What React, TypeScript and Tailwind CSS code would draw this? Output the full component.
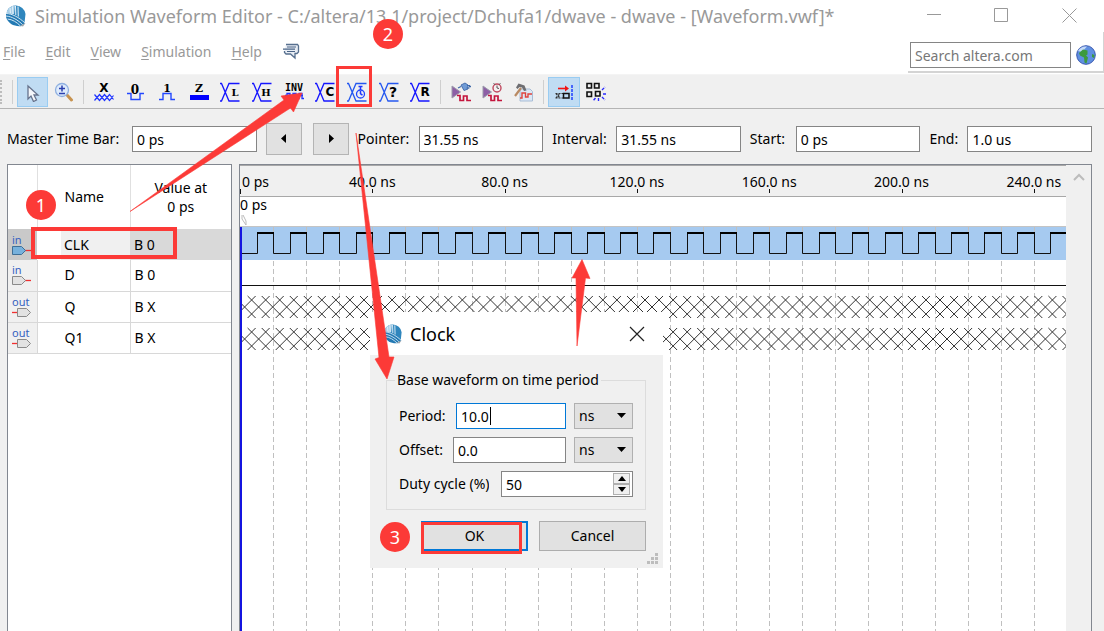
import type { ReactNode } from "react";

const PX_PER_NS = 3.3075;
const PERIOD = 10;
const CYCLES = 100;
const LABEL_STEP = 40;
const LABEL_COUNT = 6;
const RED = "#fc3a37";

const AlteraLogo = ({ className }: { className: string }) => (
  <svg viewBox="0 0 22 22" className={className} aria-hidden="true">
    <path d="M2 6A10 10 0 0 1 11 .5 10 10 0 0 1 20.500 9l-1 9L8 10z" fill="#2f86bd" />
    <path d="M2 6A10 10 0 0 1 10 .5L9 9 1 9z" fill="#a9cfe8" />
    <path d="M5 3l.5 6M7.500 1.500L8 9M10.500 1l.3 9M13 1.500l.3 10" stroke="#e3f1fa" strokeWidth="1" fill="none" />
    <path d="M1 8c6 0 13 4 19 10l-3 3C10 22 3 19 1 12z" fill="#2279b3" />
    <path d="M1 8.500c6 0 13 4 19 9.500M1 11c6 .5 12 4 17 9M2.500 14c5 .5 9 3 13 7" stroke="#d3e7f4" strokeWidth="1" fill="none" />
    <path d="M15 20.500l5.500-2.500-2.500 3.500z" fill="#9aa5ad" />
  </svg>
);

const Glyph = ({ children }: { children: ReactNode }) => (
  <svg viewBox="0 0 20 20" className="block h-5 w-5" aria-hidden="true">
    {children}
  </svg>
);

const CrossBus = ({ children, color = "#1414ff" }: { children: ReactNode; color?: string }) => (
  <Glyph>
    <path d="M0 1.500h1.500L9 19h10.500M0 19h1.500L9 1.500h10.500" fill="none" stroke={color} strokeWidth="1.300" />
    {children}
  </Glyph>
);

const Letter = ({ x, y, size, serif, children }: { x: number; y: number; size: number; serif?: boolean; children: string }) => (
  <text
    x={x}
    y={y}
    fontSize={size}
    fontWeight="700"
    textAnchor="middle"
    fontFamily={serif ? "'DejaVu Serif', serif" : "'DejaVu Sans', sans-serif"}
  >
    {children}
  </text>
);

const SimBase = () => (
  <>
    <path d="M1 4l8.500 6-8.500 6z" fill="#8d5fa5" stroke="#9c9cab" strokeWidth="1" />
    <path d="M6 13.500h3v5h3.500v-4.500h3.500v4.500H20" fill="none" stroke="#c4143c" strokeWidth="1.700" />
  </>
);

const waveTools = [
  {
    name: "Forcing unknown",
    icon: (
      <Glyph>
        <Letter x={10} y={10} size={12}>X</Letter>
        <path d="M.5 12.500l5 6 5-6 5 6 4-5M.5 18.500l5-6 5 6 5-6 4 5" fill="none" stroke="#1f35ff" strokeWidth="1.200" />
      </Glyph>
    ),
  },
  {
    name: "Forcing low",
    icon: (
      <Glyph>
        <path d="M2 11.500h4v6h9v-6h4" fill="none" stroke="#2247ff" strokeWidth="1.400" />
        <Letter x={10} y={12} size={12} serif>0</Letter>
      </Glyph>
    ),
  },
  {
    name: "Forcing high",
    icon: (
      <Glyph>
        <path d="M2 17.500h4v-6h8v6h4" fill="none" stroke="#2247ff" strokeWidth="1.400" />
        <Letter x={10} y={10} size={11} serif>1</Letter>
      </Glyph>
    ),
  },
  {
    name: "High impedance",
    icon: (
      <Glyph>
        <Letter x={10} y={10} size={11} serif>Z</Letter>
        <path d="M1 13h19v5H1z" fill="#0000ff" />
      </Glyph>
    ),
  },
  { name: "Weak low", icon: <CrossBus><Letter x={15} y={14} size={10} serif>L</Letter></CrossBus> },
  { name: "Weak high", icon: <CrossBus><Letter x={14} y={14} size={10} serif>H</Letter></CrossBus> },
  {
    name: "Invert",
    icon: (
      <Glyph>
        <text x="10" y="9" fontSize="10" fontWeight="700" textAnchor="middle" fontFamily="'DejaVu Sans Mono', monospace">INV</text>
        <path d="M1 16.500h2v-5h3v5h3v-5h3v5h3v-5h3v5h2M1 13.500h18" fill="none" stroke="#1f35ff" strokeWidth="1.300" />
      </Glyph>
    ),
  },
  { name: "Count value", icon: <CrossBus><Letter x={15} y={14} size={12}>C</Letter></CrossBus> },
  {
    name: "Overwrite clock",
    icon: (
      <CrossBus color="#2457f0">
        <circle cx="13.500" cy="12" r="4" fill="#f0f0f0" stroke="#1f45ff" strokeWidth="1.300" />
        <path d="M13.500 8V4M11.500 4.500h4M13.500 12V9M13.500 12l2 1" stroke="#1f35ff" strokeWidth="1.500" />
      </CrossBus>
    ),
  },
  { name: "Arbitrary value", icon: <CrossBus color="#2457f0"><Letter x={14} y={15} size={14}>?</Letter></CrossBus> },
  { name: "Random values", icon: <CrossBus><Letter x={15} y={14} size={12}>R</Letter></CrossBus> },
];

const simTools = [
  {
    name: "Run functional simulation",
    icon: (
      <Glyph>
        <SimBase />
        <path d="M7 6l3-1.500M18 4.500h2" stroke="#3f68a8" strokeWidth="1.300" />
        <path d="M10 3l4-2 3 2v4l-4 1.500z" fill="#6f9bd6" stroke="#3f68a8" strokeWidth=".9" />
        <path d="M16 3.500h3M15.500 6h3" stroke="#3f68a8" strokeWidth="1" />
      </Glyph>
    ),
  },
  {
    name: "Run timing simulation",
    icon: (
      <Glyph>
        <SimBase />
        <circle cx="15" cy="6" r="4" fill="#f6eef0" stroke="#c0495f" strokeWidth="1.400" />
        <path d="M15 3.500V6l2 .5M11.500 1.500l1.500 1M18.500 1.500l-1.500 1" fill="none" stroke="#555" strokeWidth="1" />
      </Glyph>
    ),
  },
  {
    name: "Generate testbench",
    icon: (
      <Glyph>
        <path d="M7 7h10l2.500 2.500V19H7z" fill="#dce8f5" stroke="#a8bdd6" />
        <path d="M7 16h2v-5h3.500v4H15v-3h4" fill="none" stroke="#e0433c" strokeWidth="1.400" />
        <path d="M8 6L2 14" stroke="#b98a63" strokeWidth="2.200" />
        <path d="M3 5.500L5.500 1.500l6 2 2 5-2.500.5-2-3.500-2.500-.5-2 2z" fill="#6e6e72" />
      </Glyph>
    ),
  },
];

const toolButton = "flex h-[30px] items-center justify-center";

const Separator = () => <span className="mx-[4px] h-6 w-px bg-[#cfcfcf]" />;

const Toolbar = () => (
  <div className="flex h-[34px] items-center border-b border-[#b4b4b4] bg-[#f0f0f0]">
    <span className="h-6 border-l-2 border-dotted border-[#bdbdbd]" />
    <span className="ml-[10px] mr-[4px] h-6 w-px bg-[#cfcfcf]" />
    <button aria-label="Selection tool" className={`${toolButton} w-[31px] border border-[#99ccf2] bg-[#c0dcf3]`}>
      <Glyph>
        <path d="M5 4v13l3-3 2.500 5.500 3-1.500-2.500-5h4z" fill="#f4f6fa" stroke="#66728c" strokeWidth="1.300" />
      </Glyph>
    </button>
    <button aria-label="Zoom tool" className={`${toolButton} w-[31px]`}>
      <Glyph>
        <path d="M13 13l4.500 5" stroke="#c79350" strokeWidth="3" strokeLinecap="round" />
        <circle cx="8" cy="8" r="6.500" fill="#deebfb" stroke="#8fb0e0" strokeWidth="1.300" />
        <path d="M5 6.500h6M8 3.500v6M5 11.500h6" stroke="#2a3fae" strokeWidth="1.500" />
      </Glyph>
    </button>
    <Separator />
    <div className="grid w-[348px] grid-cols-11">
      {waveTools.map((t) => (
        <button key={t.name} aria-label={t.name} className={toolButton}>{t.icon}</button>
      ))}
    </div>
    <Separator />
    <div className="grid w-[94px] grid-cols-3">
      {simTools.map((t) => (
        <button key={t.name} aria-label={t.name} className={toolButton}>{t.icon}</button>
      ))}
    </div>
    <Separator />
    <button aria-label="Snap to transition" className={`${toolButton} w-8 border border-[#99ccf2] bg-[#c0dcf3]`}>
      <Glyph>
        <path d="M4 6.500h8" stroke="#f01414" strokeWidth="1.600" />
        <path d="M11 3.500l4 3-4 3z" fill="#f01414" />
        <path d="M1.500 11.500h8M1.500 16h8M2 11.500l4 4.500M2 16l4-4.500" stroke="#333" strokeWidth="1.200" strokeDasharray="2 1" />
        <path d="M9.500 11.500H15V16H9.500z" fill="none" stroke="#111" strokeWidth="1.500" />
        <path d="M18 3v16" stroke="#1f3fff" strokeWidth="1.500" strokeDasharray="3 1" />
      </Glyph>
    </button>
    <button aria-label="Snap to grid" className={`${toolButton} w-[31px]`}>
      <Glyph>
        <path d="M1 1.500h4.500V6H1zM8.500 1.500H13V6H8.500zM1 10h4.500v4.500H1zM9.500 9.500h4.500V14H9.500z" fill="none" stroke="#111" strokeWidth="1.600" />
        <path d="M16 8l3-3M17 12h3M16 15l3 3M12.500 16v4M9.500 16l-2.500 3" stroke="#2a2aff" strokeWidth="1.400" strokeDasharray="3 1" />
      </Glyph>
    </button>
  </div>
);

const TitleBar = () => (
  <header className="flex h-8 items-center bg-white pl-[5px] text-[#999]">
    <AlteraLogo className="h-[22px] w-[22px]" />
    <h1 className="ml-2 flex-1 whitespace-nowrap text-[18px]">
      Simulation Waveform Editor - C:/altera/13.1/project/Dchufa1/dwave - dwave - [Waveform.vwf]*
    </h1>
    <div className="flex gap-[52px] pr-[26px]">
      <button aria-label="Minimize">
        <svg viewBox="0 0 16 16" className="h-4 w-4"><path d="M1 6.500h14" stroke="#999" /></svg>
      </button>
      <button aria-label="Maximize">
        <svg viewBox="0 0 16 16" className="h-4 w-4"><path d="M.5 .5h13v13H.5z" fill="none" stroke="#999" /></svg>
      </button>
      <button aria-label="Close">
        <svg viewBox="0 0 16 16" className="h-4 w-4"><path d="M.5 .5l14 14M14.500 .5L.5 14.500" stroke="#999" /></svg>
      </button>
    </div>
  </header>
);

const menus = ["File", "Edit", "View", "Simulation", "Help"];

const MenuBar = () => (
  <div className="flex h-[43px] items-start justify-between border-b border-[#f4f4f4] bg-white">
    <nav className="flex h-10 items-center gap-5 pl-[3px] text-[#999]">
      {menus.map((m) => (
        <button key={m}>
          <span className="underline underline-offset-2">{m[0]}</span>
          {m.slice(1)}
        </button>
      ))}
      <button aria-label="Feedback">
        <svg viewBox="0 0 18 18" className="h-[18px] w-[18px]">
          <path d="M4 1.500h11.500L16.500 3v6l-1.500 1.500h-2V15L8.500 11H4L2.500 9.500V8" fill="#e8edf4" stroke="#57708f" strokeWidth="1.300" />
          <path d="M5 4h9M1 6.200h12M5 8.500h8" stroke="#4a6486" strokeWidth="1.200" />
        </svg>
      </button>
    </nav>
    <div className="flex h-[41px] w-[196px] items-center gap-[5px] border-b-2 border-r border-[#d4d4d4] pl-[2px] pt-[7px]">
      <input
        aria-label="Search altera.com"
        placeholder="Search altera.com"
        className="h-[26px] w-[161px] border border-[#858585] bg-white px-1 placeholder:text-[#777]"
      />
      <button aria-label="Search the web">
        <svg viewBox="0 0 20 20" className="h-5 w-5">
          <circle cx="10" cy="10" r="9.300" fill="#5f8fe0" stroke="#3a58b0" />
          <path d="M2 6A9 9 0 0 1 11 1.500L6 7z" fill="#c4dafa" />
          <path d="M3 8l4-3.500 4.500 1v4l-1.500 1 2 2-1.500 6-2-1-.5-5-4-2z" fill="#3c9a3c" />
          <path d="M16 9l2.500 1-.5 3-2-1z" fill="#3c9a3c" />
        </svg>
      </button>
    </div>
  </div>
);

const TimeField = ({ id, label, value, width }: { id: string; label: string; value: string; width: string }) => (
  <>
    <label htmlFor={id} className={`${width} shrink-0 whitespace-nowrap`}>{label}</label>
    <input id={id} defaultValue={value} className="h-[26px] w-0 min-w-0 flex-1 border border-[#858585] bg-white px-1" />
  </>
);

const stepButton = "flex h-8 w-9 items-center justify-center border border-[#b4b4b4] bg-[#e1e1e1]";

const TimeBar = () => (
  <div className="flex items-center gap-[9px] pb-[9px] pl-[7px] pr-3 pt-[14px]">
    <TimeField id="master" label="Master Time Bar:" value="0 ps" width="w-[116px]" />
    <div className="flex gap-[11px]">
      <button aria-label="Previous transition" className={stepButton}>
        <svg viewBox="0 0 10 10" className="h-[10px] w-[10px]"><path d="M7 0v9L2 4.500z" /></svg>
      </button>
      <button aria-label="Next transition" className={stepButton}>
        <svg viewBox="0 0 10 10" className="h-[10px] w-[10px]"><path d="M3 0v9l5-4.500z" /></svg>
      </button>
    </div>
    <TimeField id="pointer" label="Pointer:" value="31.55 ns" width="w-[52px]" />
    <TimeField id="interval" label="Interval:" value="31.55 ns" width="w-[55px]" />
    <TimeField id="start" label="Start:" value="0 ps" width="w-[37px]" />
    <TimeField id="end" label="End:" value="1.0 us" width="w-[29px]" />
  </div>
);

const signals = [
  { name: "CLK", dir: "in", value: "B 0", selected: true },
  { name: "D", dir: "in", value: "B 0", selected: false },
  { name: "Q", dir: "out", value: "B X", selected: false },
  { name: "Q1", dir: "out", value: "B X", selected: false },
];

const PinIcon = ({ dir, selected }: { dir: string; selected: boolean }) => (
  <svg viewBox="0 0 24 26" className="block h-[26px] w-6" aria-label={dir}>
    <text x="1" y="12" fontSize="11" fill="#3561c0">{dir}</text>
    {dir === "in" ? (
      <>
        <path d="M14 18.500h6" stroke="#f03030" strokeWidth="1.300" />
        <path d="M1.500 14.500h9l4 4-4 4h-9z" fill={selected ? "#77b1dc" : "#e2e2e2"} stroke={selected ? "#3f6f96" : "#8a8a8a"} />
      </>
    ) : (
      <>
        <path d="M1 18.500h6" stroke="#f03030" strokeWidth="1.300" />
        <path d="M6.500 14.500h9l4 4-4 4h-9z" fill="#e2e2e2" stroke="#8a8a8a" />
      </>
    )}
  </svg>
);

const SignalTable = () => (
  <div className="w-[225px] shrink-0 border border-b-0 border-[#828790] bg-white">
    <table className="w-full table-fixed border-collapse text-left">
      <thead>
        <tr className="h-16">
          <th className="w-[29px] border-r border-[#e0e0e0]" aria-label="Direction" />
          <th className="w-[93px] border-r border-[#e0e0e0] pl-[27px] font-normal">Name</th>
          <th className="text-center font-normal leading-[19px]">Value at<br />0 ps</th>
        </tr>
      </thead>
      <tbody>
        {signals.map((s) => (
          <tr key={s.name} className={s.selected ? "h-[31px] bg-[#d9d9d9]" : "h-[31px] border-b border-[#d8d8d8]"}>
            <td className={s.selected ? "bg-[#c9c9c9] p-0 pl-[3px]" : "border-r border-[#d8d8d8] bg-[#f0f0f0] p-0 pl-[3px]"}>
              <PinIcon dir={s.dir} selected={s.selected} />
            </td>
            <td className={s.selected ? "p-0" : "border-r border-[#d8d8d8] p-0"}>
              <div className="flex h-[30px] items-center">
                <span className="h-full w-6 bg-white" />
                <span className={s.selected ? "flex h-full flex-1 items-center bg-[#f0f0f0] pl-[3px]" : "pl-[3px]"}>{s.name}</span>
              </div>
            </td>
            <td className="p-0 pl-1">{s.value}</td>
          </tr>
        ))}
      </tbody>
    </table>
  </div>
);

const ns = (t: number) => t * PX_PER_NS;

const clockPath = () => {
  let d = "M0 26.500";
  for (let i = 0; i < CYCLES; i++) {
    const rise = Math.round(ns(i * PERIOD + PERIOD / 2)) + 0.5;
    const fall = Math.round(ns((i + 1) * PERIOD)) + 0.5;
    d += `H${rise}V6H${fall}V26.500`;
  }
  return d;
};

const clockTops = () => {
  let d = "";
  for (let i = 0; i < CYCLES; i++) {
    d += `M${Math.round(ns(i * PERIOD + PERIOD / 2))} 6H${Math.round(ns((i + 1) * PERIOD)) + 1}`;
  }
  return d;
};

const hatchPath = (top: number) => {
  let d = "";
  for (let x = -20.5; x < 3400; x += 14.05) {
    d += `M${x.toFixed(1)} ${top}l22 22M${x.toFixed(1)} ${top + 22}l22-22`;
  }
  return d;
};

const ticks = Array.from({ length: LABEL_COUNT }, (_, i) => (i + 1) * LABEL_STEP);
const gridLines = Array.from({ length: CYCLES }, (_, i) => (i + 1) * PERIOD);

const WaveView = () => (
  <div className="flex min-w-0 flex-1 border border-b-0 border-[#828790] bg-white">
    <div className="flex min-w-0 flex-1 flex-col">
      <svg className="block h-[32px] w-full border-b border-t border-[#a8a8a8] bg-[#f0f0f0]">
        <text x="2" y="21" fontSize="14">0 ps</text>
        <path d="M.5 23v5" stroke="#111" />
        {ticks.map((t) => (
          <g key={t}>
            <text x={ns(t)} y="21" fontSize="14" textAnchor="middle">{t.toFixed(1)} ns</text>
            <path d={`M${Math.round(ns(t)) + 0.5} 23v4`} stroke="#111" />
          </g>
        ))}
      </svg>
      <div className="h-[30px] border-b border-[#c4c4c4] leading-4">
        0 ps
        <svg viewBox="0 0 8 12" className="block h-3 w-2" aria-hidden="true">
          <path d="M2 2v4l4 6V8L3 2" fill="none" stroke="#bbb" />
        </svg>
      </div>
      <svg className="block min-h-[340px] w-full flex-1">
        <rect width="100%" height="33" fill="#a6caf0" />
        {gridLines.map((t) => (
          <g key={t} stroke="#c0c0c0">
            <path d={`M${Math.round(ns(t)) + 0.5} 0v5`} />
            <line
              x1={Math.round(ns(t)) + 0.5}
              x2={Math.round(ns(t)) + 0.5}
              y1="34"
              y2="100%"
              strokeDasharray="5 3"
            />
          </g>
        ))}
        <path d={clockPath()} fill="none" stroke="#111" />
        <path d={clockTops()} fill="none" stroke="#000" strokeWidth="2" />
        <path d="M0 58.500h3400" stroke="#111" />
        <path d={hatchPath(69)} fill="none" stroke="#333" />
        <path d={hatchPath(101)} fill="none" stroke="#333" />
        <path d="M1 0v4000" stroke="#1414e0" strokeWidth="2" />
      </svg>
    </div>
    <div className="flex w-[25px] justify-center bg-[#f0f0f0] pt-[8px]">
      <svg viewBox="0 0 12 8" className="h-2 w-3"><path d="M1 7l5-5 5 5" fill="none" stroke="#bcbcbc" strokeWidth="2" /></svg>
    </div>
  </div>
);

const UnitSelect = ({ label }: { label: string }) => (
  <div className="relative ml-2 h-[26px] w-[59px]">
    <select aria-label={label} className="h-full w-full appearance-none border border-[#b0b0b0] bg-[#e1e1e1] pl-1">
      <option>ns</option>
    </select>
    <svg viewBox="0 0 10 6" className="pointer-events-none absolute right-[6px] top-[10px] h-[6px] w-[10px]"><path d="M0 0h9L4.500 5z" /></svg>
  </div>
);

const ClockDialog = () => (
  <div role="dialog" aria-label="Clock" className="absolute left-[370px] top-[312px] w-[293px] bg-[#f0f0f0]">
    <div className="flex h-[43px] items-center bg-white pl-[13px] pr-[18px]">
      <AlteraLogo className="h-[22px] w-[20px]" />
      <h2 className="ml-[7px] flex-1 text-[18px]">Clock</h2>
      <button aria-label="Close dialog">
        <svg viewBox="0 0 16 16" className="h-4 w-4"><path d="M1 1l14 14M15 1L1 15" stroke="#222" strokeWidth="1.200" /></svg>
      </button>
    </div>
    <div className="pb-[17px] pl-4 pr-[17px] pt-[15px]">
      <fieldset className="flex flex-col gap-2 border border-[#dcdcdc] px-3 pb-3 pt-[13px]">
        <legend className="-ml-[4px] px-[2px] leading-5">Base waveform on time period</legend>
        <div className="flex items-center">
          <label htmlFor="period" className="w-[57px]">Period:</label>
          <div className="relative flex-1">
            <input id="period" defaultValue="10.0" className="h-[26px] w-full border border-[#0078d7] bg-white px-1" />
            <span className="absolute left-[34px] top-1 h-[18px] w-px bg-black" />
          </div>
          <UnitSelect label="Period unit" />
        </div>
        <div className="flex items-center">
          <label htmlFor="offset" className="w-[54px]">Offset:</label>
          <input id="offset" defaultValue="0.0" className="h-[26px] w-0 flex-1 border border-[#858585] bg-white px-1" />
          <UnitSelect label="Offset unit" />
        </div>
        <div className="flex items-center">
          <label htmlFor="duty" className="mr-3 w-[90px] overflow-hidden whitespace-nowrap">Duty cycle (%)</label>
          <div className="flex h-[26px] flex-1 items-center border border-[#858585] bg-white pr-[2px]">
            <input id="duty" defaultValue="50" className="h-full w-0 flex-1 px-1" />
            <div className="flex w-[17px] flex-col">
              <button aria-label="Increase" className="flex h-[11px] items-center justify-center border border-[#b0b0b0] bg-[#f0f0f0]">
                <svg viewBox="0 0 8 5" className="h-[5px] w-2"><path d="M0 5h8L4 0z" /></svg>
              </button>
              <button aria-label="Decrease" className="flex h-[11px] items-center justify-center border border-[#b0b0b0] bg-[#f0f0f0]">
                <svg viewBox="0 0 8 5" className="h-[5px] w-2"><path d="M0 0h8L4 5z" /></svg>
              </button>
            </div>
          </div>
        </div>
      </fieldset>
      <div className="mt-[11px] flex justify-end gap-[11px]">
        <button className="h-[30px] w-[107px] border-2 border-[#0078d7] bg-[#e1e1e1]">OK</button>
        <button className="h-[30px] w-[107px] border border-[#adadad] bg-[#e1e1e1]">Cancel</button>
      </div>
    </div>
    <svg viewBox="0 0 12 12" className="absolute bottom-[3px] right-[4px] h-3 w-3" aria-hidden="true">
      <path d="M8 0h3v3H8zM4 4h3v3H4zM8 4h3v3H8zM0 8h3v3H0zM4 8h3v3H4zM8 8h3v3H8z" fill="#bdbdbd" />
    </svg>
  </div>
);

const badge = "absolute flex h-[30px] w-[30px] items-center justify-center rounded-full bg-[#fc3a37] text-[18px] text-white";

// Tutorial marks: numbered steps, boxes and arrows drawn over the window
const Annotations = () => (
  <div className="pointer-events-none absolute inset-0">
    <div className="absolute left-[31px] top-[227px] h-8 w-[146px] border-4 border-[#fc3a37]" />
    <div className="absolute left-[336px] top-[66px] h-[41px] w-9 border-[3px] border-[#fc3a37]" />
    <div className="absolute left-[421px] top-[522px] h-8 w-[101px] border-[3px] border-[#fc3a37]" />
    <svg className="absolute inset-0 h-full w-full" aria-hidden="true">
      <path d="M130 211.500L284 100 281 96 302 93 293.500 112 290.500 108z" fill={RED} stroke={RED} strokeWidth=".6" />
      <path d="M356 133L379 357.500 375 359 387 379 394 357 389 357z" fill={RED} stroke={RED} strokeWidth=".6" />
      <path d="M577 346L576 278 572 278 582 259.500 590 278.500 585.500 278z" fill={RED} stroke={RED} strokeWidth=".6" />
    </svg>
    <span className={`${badge} left-[26px] top-[190px]`}>1</span>
    <span className={`${badge} left-[373px] top-[19px]`}>2</span>
    <span className={`${badge} left-[380px] top-[522px]`}>3</span>
  </div>
);

const App = () => {
  return (
    <div className="relative flex min-h-screen flex-col overflow-hidden bg-[#f0f0f0] font-['Noto_Sans',sans-serif] text-[14px] leading-5 text-black">
      <TitleBar />
      <MenuBar />
      <Toolbar />
      <TimeBar />
      <main className="flex flex-1 gap-[7px] pl-[7px] pr-3">
        <SignalTable />
        <WaveView />
      </main>
      <ClockDialog />
      <Annotations />
    </div>
  );
};

export default App;
